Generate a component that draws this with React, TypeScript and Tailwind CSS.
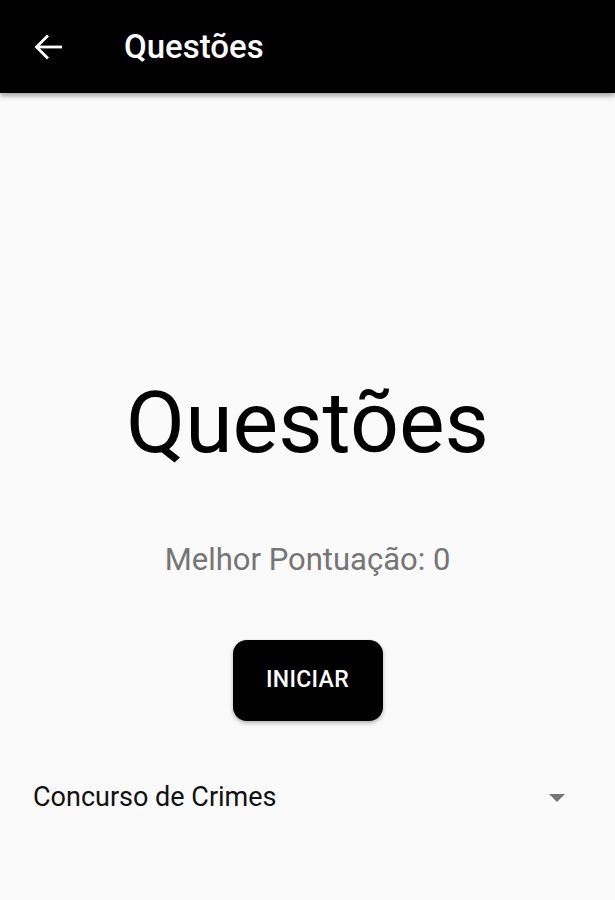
const App = () => {
  return (
    <main className="w-full h-screen bg-[#fafafa] flex flex-col font-[Roboto,sans-serif]">
      <header className="h-[93px] bg-black flex items-center shrink-0 shadow-[0_3px_5px_rgba(0,0,0,0.35)] z-10">
        <button className="ml-[28px] w-[40px] h-[40px] flex items-center justify-center text-white">
          <svg width="40" height="40" viewBox="0 0 40 40" fill="none" stroke="currentColor" strokeWidth="2.8">
            <path d="M34 20H9" />
            <path d="M20 8.5L8.5 20 20 31.5" />
          </svg>
        </button>
        <h1 className="ml-[56px] text-white text-[33px] font-medium leading-none">
          Questões
        </h1>
      </header>
      <div className="flex flex-col items-center">
        <h2 className="mt-[287px] text-[86px] leading-none text-black font-normal">
          Questões
        </h2>
        <p className="mt-[78px] text-[31px] leading-none text-[#757575]">
          Melhor Pontuação: 0
        </p>
        <button className="mt-[65px] w-[150px] h-[81px] bg-black rounded-[14px] text-white text-[23px] font-medium tracking-[0.3px] shadow-[0_2px_4px_rgba(0,0,0,0.3)]">
          INICIAR
        </button>
      </div>
      <div className="mt-[63px] ml-[33px] mr-[48px] flex items-center justify-between">
        <span className="text-[27px] text-[#111] leading-none">Concurso de Crimes</span>
        <svg width="20" height="10" viewBox="0 0 20 10">
          <path d="M2 1h16l-8 8z" fill="#757575" />
        </svg>
      </div>
    </main>
  );
};

export default App;
